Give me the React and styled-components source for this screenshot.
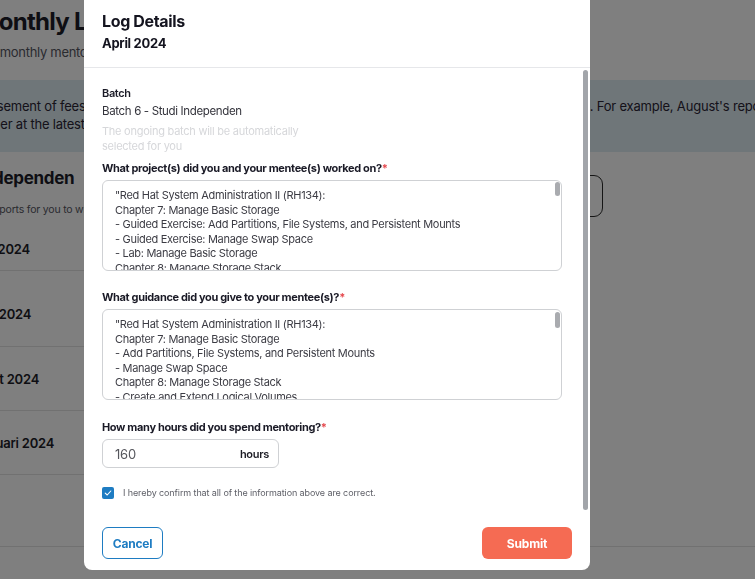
import React from 'react';
import styled, { createGlobalStyle } from 'styled-components';

const GlobalStyle = createGlobalStyle`
  html, body {
    margin: 0;
    padding: 0;
    overflow: hidden;
  }
  body {
    font-family: Inter, "Noto Sans", sans-serif;
    background: #ffffff;
    color: #1c1c28;
  }
  * {
    box-sizing: border-box;
  }
`;

/* ---------- page behind the modal ---------- */

const Page = styled.div`
  width: 755px;
  height: 579px;
  overflow: hidden;
  display: flex;
  flex-direction: column;
`;

const PageHeader = styled.header`
  height: 80px;
  padding-top: 6px;
`;

const PageTitle = styled.h1`
  margin: 0 0 0 -23px;
  font-size: 24px;
  line-height: 32px;
  font-weight: 700;
  letter-spacing: -0.7px;
  white-space: nowrap;
`;

const PageSubtitle = styled.p`
  margin: 5px 0 0 ${(p) => p.$shift}px;
  font-size: 13px;
  line-height: 18px;
  color: #55565f;
  white-space: nowrap;
  letter-spacing: -0.3px;
`;

const Banner = styled.div`
  height: 72px;
  padding-top: 17px;
  background: #deecf2;
  font-size: 13px;
  line-height: 18px;
  color: #2a2535;
  letter-spacing: -0.2px;
`;

const BannerLine = styled.div`
  margin-left: ${(p) => p.$shift}px;
  white-space: nowrap;
`;

const Section = styled.section`
  margin-left: -160px;
  width: 763px;
`;

const SectionHead = styled.div`
  display: flex;
  justify-content: space-between;
  align-items: flex-start;
  height: 75px;
  padding-top: 14px;
`;

const SectionText = styled.div`
  display: flex;
  flex-direction: column;
`;

const SectionTitle = styled.h2`
  margin: 0 0 0 ${(p) => p.$shift}px;
  font-size: 17px;
  line-height: 24px;
  font-weight: 700;
  letter-spacing: -0.3px;
  white-space: nowrap;
`;

const SectionNote = styled.p`
  margin: 12px 0 0 ${(p) => p.$shift}px;
  font-size: 10.5px;
  line-height: 16px;
  color: #55565f;
  white-space: nowrap;
  letter-spacing: -0.2px;
`;

const OutlineButton = styled.button`
  margin-top: 9px;
  height: 42px;
  padding: 0 18px;
  border: 1px solid #2b2b2b;
  border-radius: 9px;
  background: #ffffff;
  font-family: inherit;
  font-size: 13px;
  font-weight: 600;
`;

const LogList = styled.div`
  width: 700px;
`;

const LogRow = styled.div`
  height: ${(p) => p.$h}px;
  display: flex;
  align-items: center;
  justify-content: ${(p) => (p.$center ? 'center' : 'flex-start')};
  padding-left: ${(p) => p.$indent || 0}px;
  padding-top: ${(p) => p.$drop || 0}px;
  border-bottom: 1px solid #e2e2e2;
  font-size: 13px;
  font-weight: 600;
  letter-spacing: -0.2px;
`;

const PageFooterLine = styled.div`
  border-top: 1px solid #e2e2e2;
  margin-top: -1px;
`;

/* ---------- modal ---------- */

const Overlay = styled.div`
  position: fixed;
  inset: 0;
  background: rgba(0, 0, 0, 0.5);
  display: flex;
  align-items: flex-start;
  padding-left: 84px;
`;

const Modal = styled.div`
  margin-top: -8px;
  width: 506px;
  height: 578px;
  background: #ffffff;
  border-radius: 8px;
  display: flex;
  flex-direction: column;
  overflow: hidden;
`;

const ModalHeader = styled.div`
  height: 76px;
  padding: 18px 18px 0;
  border-bottom: 1px solid #e6e7ea;
`;

const ModalTitle = styled.h3`
  margin: 0;
  font-size: 16px;
  line-height: 22px;
  font-weight: 700;
  letter-spacing: -0.35px;
  color: #14141f;
`;

const ModalDate = styled.div`
  margin-top: 2px;
  font-size: 13px;
  line-height: 18px;
  font-weight: 700;
  letter-spacing: -0.3px;
  color: #14141f;
`;

const BodyFrame = styled.div`
  position: relative;
  flex: 1;
  min-height: 0;
  display: flex;
`;

const ModalBody = styled.div`
  flex: 1;
  overflow-y: auto;
  padding: 17px 28px 19px 18px;
`;

const ScrollThumb = styled.div`
  position: absolute;
  right: ${(p) => p.$right}px;
  top: ${(p) => p.$top}px;
  width: 5px;
  height: ${(p) => (p.$height ? `${p.$height}px` : 'auto')};
  bottom: ${(p) => (p.$height ? 'auto' : `${p.$top}px`)};
  border-radius: 3px;
  background: ${(p) => p.$color};
`;

const Label = styled.div`
  font-size: 11px;
  line-height: 16px;
  font-weight: ${(p) => (p.$light ? 600 : 700)};
  letter-spacing: -0.35px;
  color: #1a1a26;
`;

const Required = styled.span`
  color: #e5484d;
`;

const Value = styled.div`
  margin-top: 2px;
  font-size: 11.5px;
  line-height: 16px;
  letter-spacing: -0.35px;
  color: #34343c;
`;

const Helper = styled.div`
  margin-top: 5px;
  width: 200px;
  font-size: 11px;
  line-height: 15px;
  letter-spacing: -0.25px;
  color: #d6d7da;
`;

const Field = styled.div`
  margin-top: ${(p) => p.$gap}px;
  display: flex;
  flex-direction: column;
  gap: 4px;
`;

const AreaFrame = styled.div`
  position: relative;
`;

const TextArea = styled.textarea`
  display: block;
  width: 100%;
  height: 91px;
  padding: 7px 20px 6px 12px;
  border: 1px solid #cfd1d4;
  border-radius: 6px;
  resize: none;
  font-family: inherit;
  font-size: 11px;
  line-height: 14.6px;
  letter-spacing: -0.3px;
  color: #3c3c44;
  outline: none;
  overflow: hidden;
`;

const HoursBox = styled.div`
  width: 177px;
  height: 29px;
  padding: 0 9px 0 12px;
  border: 1px solid #cfd1d4;
  border-radius: 6px;
  display: flex;
  align-items: center;
  justify-content: space-between;
`;

const HoursInput = styled.input`
  width: 80px;
  border: none;
  outline: none;
  padding: 0;
  font-family: inherit;
  font-size: 13px;
  color: #55565c;
  letter-spacing: -0.2px;
`;

const HoursUnit = styled.span`
  font-size: 11px;
  font-weight: 600;
  letter-spacing: -0.3px;
  color: #1c1c24;
`;

const ConfirmRow = styled.label`
  margin-top: 19px;
  display: flex;
  align-items: center;
  gap: 9px;
  font-size: 9px;
  line-height: 12px;
  letter-spacing: -0.1px;
  color: #5d5e66;
`;

const CheckBox = styled.span`
  width: 12px;
  height: 12px;
  border-radius: 2px;
  background: #1e7cc2;
  display: flex;
  align-items: center;
  justify-content: center;
  flex-shrink: 0;
`;

const ModalFooter = styled.div`
  height: 58px;
  padding: 15px 18px 0;
  display: flex;
  justify-content: space-between;
  align-items: flex-start;
`;

const FooterButton = styled.button`
  height: 32px;
  width: ${(p) => p.$w}px;
  border-radius: 6px;
  font-family: inherit;
  font-size: 12px;
  font-weight: 700;
  letter-spacing: -0.2px;
  cursor: pointer;
  border: ${(p) => (p.$primary ? 'none' : '1.5px solid #1e7cc2')};
  background: ${(p) => (p.$primary ? '#f56b53' : '#ffffff')};
  color: ${(p) => (p.$primary ? '#ffffff' : '#1e7cc2')};
`;

const projectText = `"Red Hat System Administration II (RH134):
Chapter 7: Manage Basic Storage
- Guided Exercise: Add Partitions, File Systems, and Persistent Mounts
- Guided Exercise: Manage Swap Space
- Lab: Manage Basic Storage
Chapter 8: Manage Storage Stack
- Guided Exercise: Create and Extend Logical Volumes
- Guided Exercise: Manage Layered Storage
- Lab: Manage Storage Stack
Chapter 9: Access Network-Attached Storage
- Guided Exercise: Manage Network-Attached Storage with NFS
- Guided Exercise: Automount Network-Attached Storage
- Lab: Access Network-Attached Storage
Chapter 10: Control the Boot Process
- Guided Exercise: Select the Boot Target
- Guided Exercise: Reset the Root Password
- Lab: Control the Boot Process"`;

const guidanceText = `"Red Hat System Administration II (RH134):
Chapter 7: Manage Basic Storage
- Add Partitions, File Systems, and Persistent Mounts
- Manage Swap Space
Chapter 8: Manage Storage Stack
- Create and Extend Logical Volumes
- Manage Layered Storage
Chapter 9: Access Network-Attached Storage
- Manage Network-Attached Storage with NFS
- Automount Network-Attached Storage"`;

const logs = [
  { label: 'Mei 2024', h: 44, indent: 132, drop: 0 },
  { label: 'April 2024', h: 76, indent: 127, drop: 10 },
  { label: 'Maret 2024', h: 64, indent: 128, drop: 0 },
  { label: 'Februari 2024', h: 64, indent: 128, drop: 0 },
];

const App = () => {
  return (
    <>
      <GlobalStyle />
      <Page>
        <PageHeader>
          <PageTitle>Monthly Logs</PageTitle>
          <PageSubtitle $shift={-18}>All monthly mentoring logs of your batch</PageSubtitle>
        </PageHeader>
        <Banner>
          <BannerLine $shift={-42}>
            Disbursement of fees will be processed after your monthly log is submitted and approved by the HR admin. For example, August&apos;s report
          </BannerLine>
          <BannerLine $shift={-36}>October at the latest.</BannerLine>
        </Banner>
        <Section>
          <SectionHead>
            <SectionText>
              <SectionTitle $shift={17}>Batch 6 - Studi Independen</SectionTitle>
              <SectionNote $shift={47}>Here are the monthly reports for you to write</SectionNote>
            </SectionText>
            <OutlineButton>Filter</OutlineButton>
          </SectionHead>
          <LogList>
            {logs.map((log) => (
              <LogRow key={log.label} $h={log.h} $indent={log.indent} $drop={log.drop}>
                {log.label}
              </LogRow>
            ))}
            <LogRow $h={72} $center>
              Load more
            </LogRow>
          </LogList>
        </Section>
        <PageFooterLine />
      </Page>

      <Overlay>
        <Modal>
          <ModalHeader>
            <ModalTitle>Log Details</ModalTitle>
            <ModalDate>April 2024</ModalDate>
          </ModalHeader>

          <BodyFrame>
            <ModalBody>
              <Label $light>Batch</Label>
              <Value>Batch 6 - Studi Independen</Value>
              <Helper>The ongoing batch will be automatically selected for you</Helper>

              <Field $gap={6}>
                <Label>
                  What project(s) did you and your mentee(s) worked on?<Required>*</Required>
                </Label>
                <AreaFrame>
                  <TextArea readOnly defaultValue={projectText} />
                  <ScrollThumb $right={2} $top={2} $height={14} $color="#a9abaf" />
                </AreaFrame>
              </Field>

              <Field $gap={18}>
                <Label>
                  What guidance did you give to your mentee(s)?<Required>*</Required>
                </Label>
                <AreaFrame>
                  <TextArea readOnly defaultValue={guidanceText} />
                  <ScrollThumb $right={2} $top={3} $height={16} $color="#a9abaf" />
                </AreaFrame>
              </Field>

              <Field $gap={19}>
                <Label>
                  How many hours did you spend mentoring?<Required>*</Required>
                </Label>
                <HoursBox>
                  <HoursInput readOnly defaultValue="160" />
                  <HoursUnit>hours</HoursUnit>
                </HoursBox>
              </Field>

              <ConfirmRow>
                <CheckBox>
                  <svg width="8" height="8" viewBox="0 0 10 10" fill="none">
                    <path d="M1.5 5.2 L4 7.5 L8.5 2.5" stroke="#ffffff" strokeWidth="1.4" strokeLinecap="round" strokeLinejoin="round" />
                  </svg>
                </CheckBox>
                I hereby confirm that all of the information above are correct.
              </ConfirmRow>
            </ModalBody>
            <ScrollThumb $right={2} $top={2} $color="#a2a5aa" />
          </BodyFrame>

          <ModalFooter>
            <FooterButton $w={61}>Cancel</FooterButton>
            <FooterButton $w={90} $primary>
              Submit
            </FooterButton>
          </ModalFooter>
        </Modal>
      </Overlay>
    </>
  );
};

export default App;
